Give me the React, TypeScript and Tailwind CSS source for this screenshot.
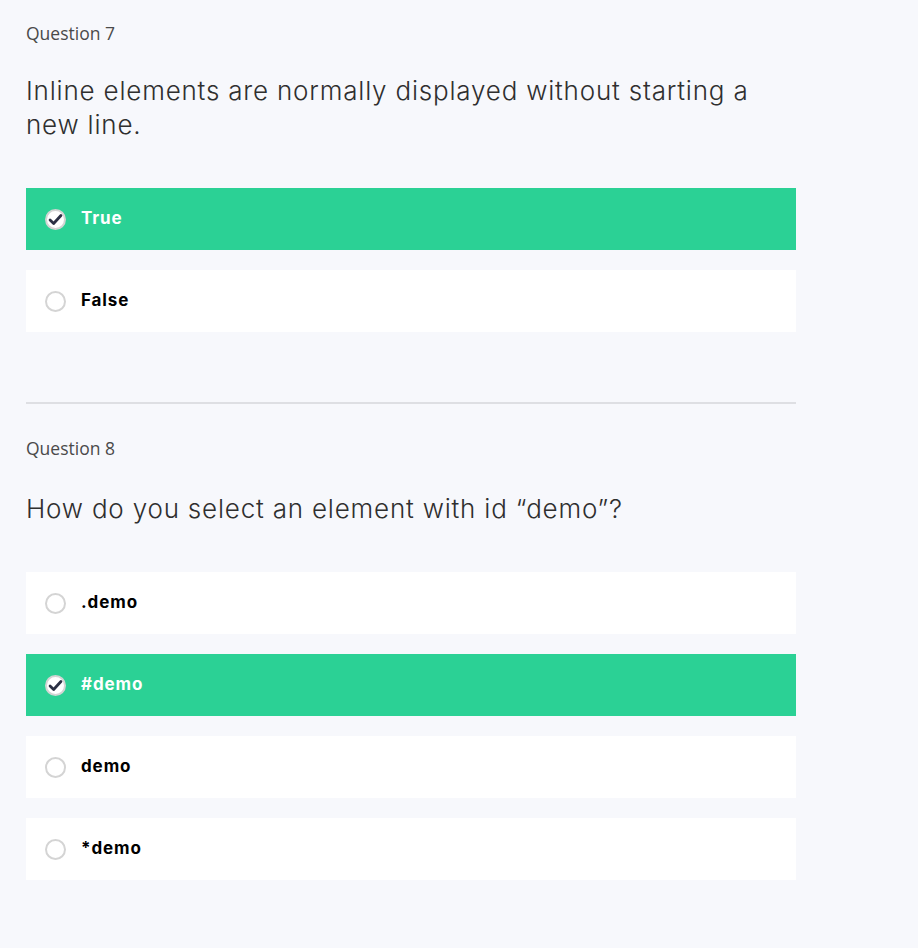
import { Fragment } from "react";

interface Option {
  label: string;
  selected?: boolean;
}

interface Question {
  number: number;
  text: string;
  options: Option[];
}

const QUESTIONS: Question[] = [
  {
    number: 7,
    text: "Inline elements are normally displayed without starting a new line.",
    options: [{ label: "True", selected: true }, { label: "False" }],
  },
  {
    number: 8,
    text: "How do you select an element with id \u201cdemo\u201d?",
    options: [
      { label: ".demo" },
      { label: "#demo", selected: true },
      { label: "demo" },
      { label: "*demo" },
    ],
  },
];

function Radio({ checked }: { checked?: boolean }) {
  return (
    <span className="grid h-[21px] w-[21px] shrink-0 place-items-center rounded-full border-2 border-[#d4d4d4] bg-white">
      {checked && (
        <svg viewBox="0 0 16 16" className="h-[15px] w-[15px]" fill="none">
          <path
            d="M2.2 8.6l3.8 3.6 7.8-8.4"
            stroke="#2b3044"
            strokeWidth="3"
            strokeLinecap="round"
            strokeLinejoin="round"
          />
        </svg>
      )}
    </span>
  );
}

function QuestionBlock({ q, first }: { q: Question; first: boolean }) {
  return (
    <section>
      <div
        className={(first ? "pt-[21px]" : "pt-[32px]") + " text-[17.5px] leading-[24px] text-[#4a4a4a]"}
        style={{ fontFamily: '"Open Sans", sans-serif' }}
      >
        Question {q.number}
      </div>
      <h2
        className={
          (first ? "mt-[29px]" : "mt-[32px]") +
          " max-w-[760px] text-[26px] leading-[34px] font-light tracking-[0.8px] text-[#2f2f2f]"
        }
        style={{ fontFamily: '"Inter", sans-serif' }}
      >
        {q.text}
      </h2>
      <div className="mt-[46px] flex flex-col gap-5">
        {q.options.map((o) => (
          <div
            key={o.label}
            className={
              "flex h-[62px] items-center gap-[15px] pl-[19px] text-[17px] font-bold tracking-[0.9px] " +
              (o.selected ? "bg-[#2bd195] text-white" : "bg-white text-black")
            }
            style={{ fontFamily: '"Inter", sans-serif' }}
          >
            <Radio checked={o.selected} />
            <span>{o.label}</span>
          </div>
        ))}
      </div>
    </section>
  );
}

export default function App() {
  return (
    <div className="min-h-screen bg-[#f7f8fc]">
      <main className="w-[770px] pl-[26px] box-content">
        {QUESTIONS.map((q, i) => (
          <Fragment key={q.number}>
            {i > 0 && <hr className="mt-[70px] border-t-2 border-[#dedfe3]" />}
            <QuestionBlock q={q} first={i === 0} />
          </Fragment>
        ))}
      </main>
    </div>
  );
}
